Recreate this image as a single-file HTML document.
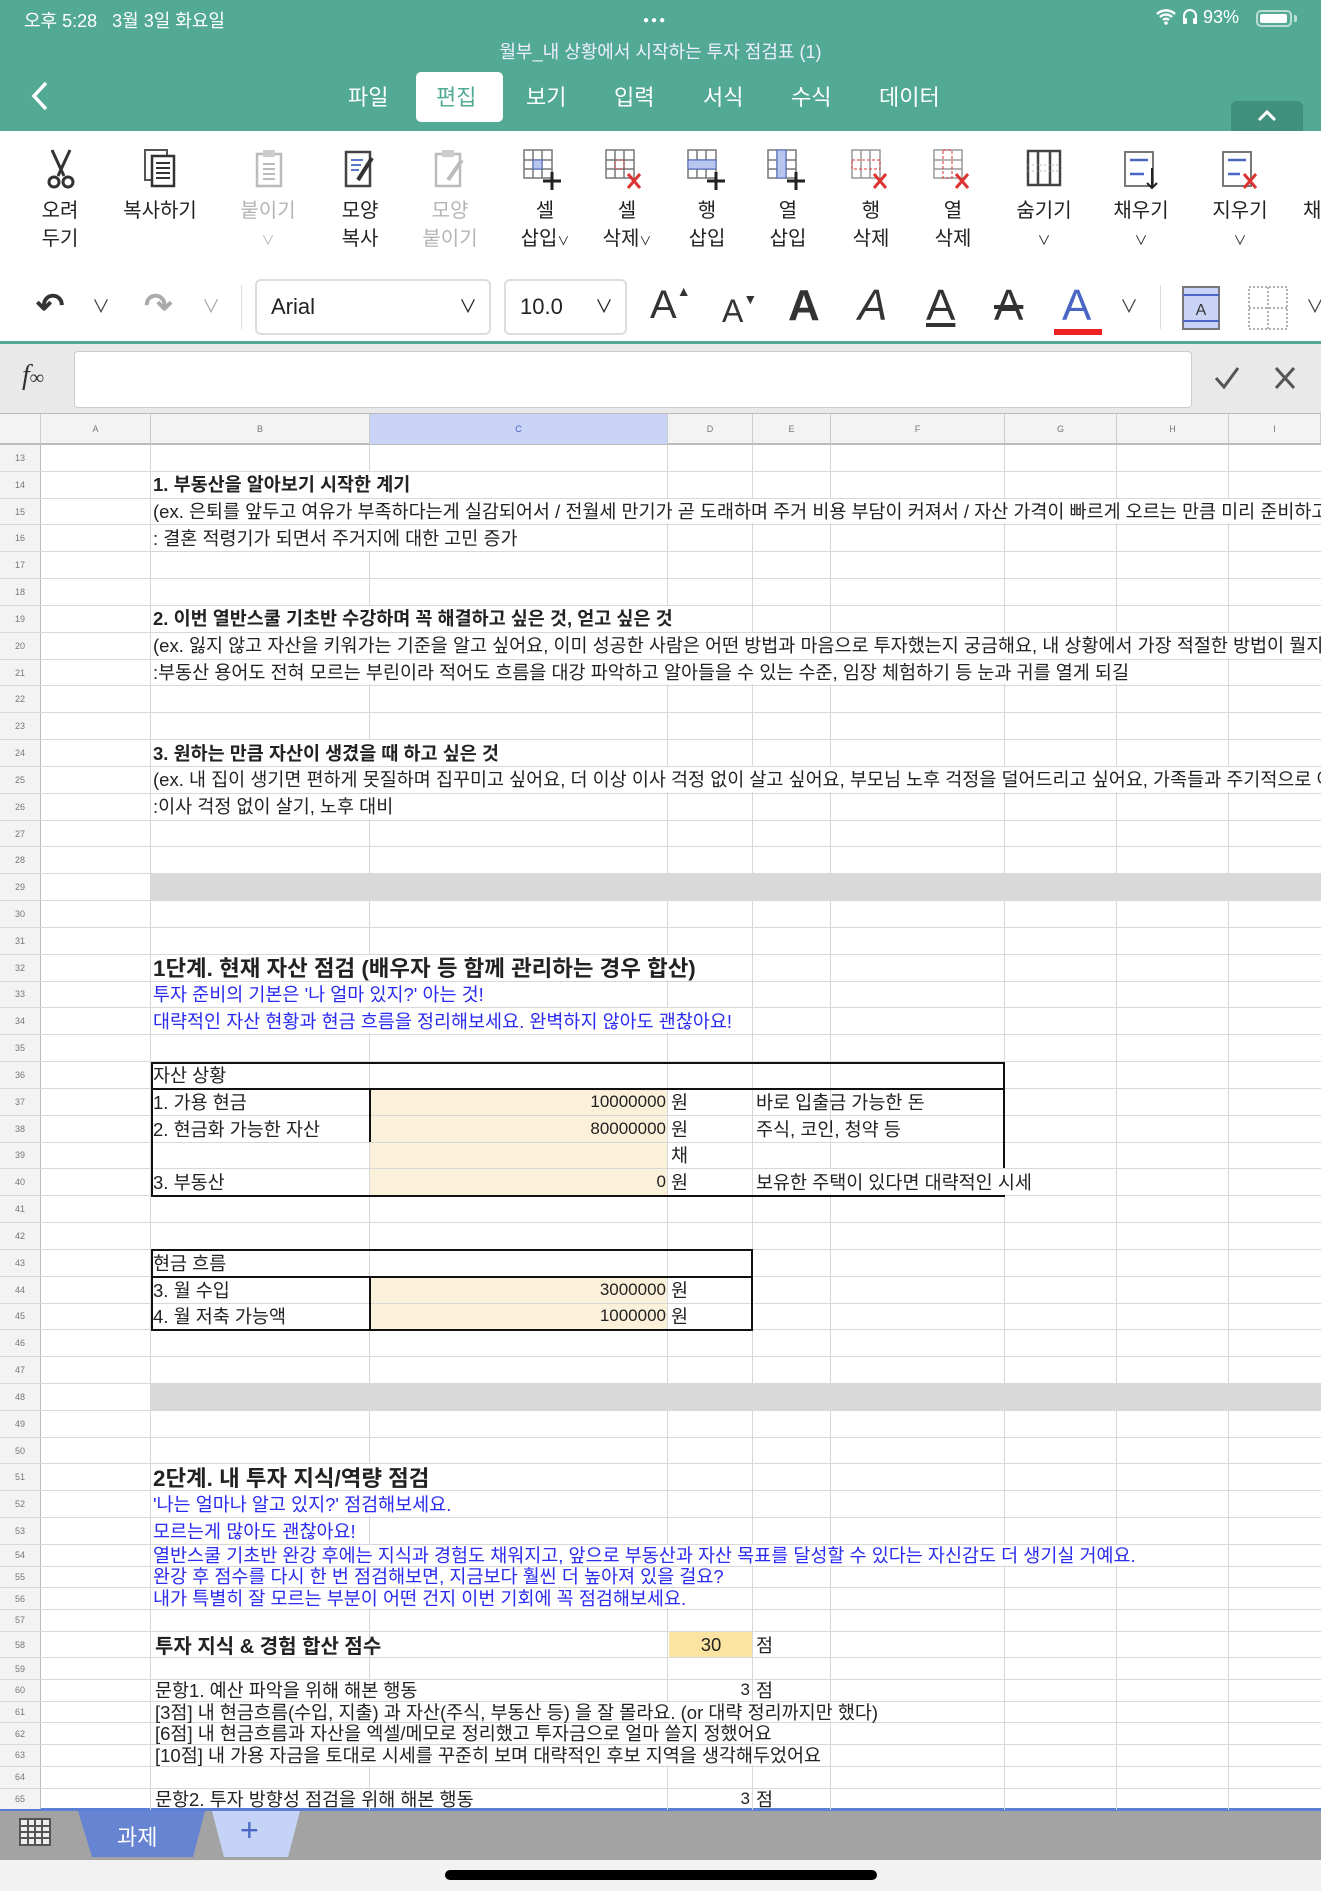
<!DOCTYPE html>
<html><head><meta charset="utf-8"><style>
*{margin:0;padding:0}
body{width:1321px;height:1891px;overflow:hidden;position:relative;background:#fff;font-family:"Liberation Sans","Noto Sans CJK KR",sans-serif;color:#222}
.abs{position:absolute}
#top{left:0;top:0;width:1321px;height:131px;background:#53aa94;color:#fff}
.tab{position:absolute;top:80px;font-size:22px;color:#fff}
#tb{left:0;top:131px;width:1321px;height:140px;background:#fff;border-bottom:1px solid #eee}
.tl{position:absolute;top:197px;width:90px;text-align:center;font-size:20px;line-height:28px;color:#222}
.g{color:#b5b5b5}
#fb{left:0;top:271px;width:1321px;height:70px;background:#fff;border-bottom:3px solid #53aa94}
#fx{left:0;top:344px;width:1321px;height:69px;background:#e9e9e9}
#ch{left:0;top:413px;width:1321px;height:32px;background:#f3f3f3;border-top:1px solid #bbb;border-bottom:2px solid #bbb;box-sizing:border-box}
.cl{position:absolute;top:0;height:30px;line-height:30px;text-align:center;font-size:9px;color:#777;border-right:1px solid #ccc;box-sizing:border-box}
#grid{left:0;top:445px;width:1321px;height:1365px;overflow:hidden}
.r{position:relative;box-sizing:border-box;border-bottom:1px solid #d8d8d8}
.a{height:26.84px}.b{height:21.7px}.c{height:26.7px}
.n{position:absolute;left:0;top:0;width:41px;height:100%;display:flex;align-items:center;justify-content:center;font-size:9px;color:#777;z-index:3;background:#f3f3f3;border-right:1px solid #bbb;box-sizing:border-box}
.t{position:absolute;left:153px;top:0;height:calc(100% - 1px);display:flex;align-items:center;white-space:nowrap;background:#fff;z-index:2;font-size:18.5px;padding-right:3px}
.u{position:absolute;top:0;height:100%;display:flex;align-items:center;white-space:nowrap;z-index:2;font-size:18.5px}
.bd{font-weight:bold}
.bl{color:#2b2bf0}
.lg{font-size:22.4px}
.vl{position:absolute;top:0;width:1px;height:1365px;background:#d8d8d8;z-index:1}
.fill{position:absolute;z-index:0}
.k{position:absolute;background:#111;z-index:4}
.num{font-size:17px}
</style></head><body>

<div id="top" class="abs">
  <div class="abs" style="left:24px;top:7px;font-size:18px">오후 5:28&nbsp;&nbsp;&nbsp;3월 3일 화요일</div>
  <div class="abs" style="left:643px;top:15px;font-size:10px;letter-spacing:2px">●●●</div>
  <div class="abs" style="left:1155px;top:7px;font-size:18px">
    <svg width="22" height="18" viewBox="0 0 22 18" style="vertical-align:-2px"><path d="M2 7a13 13 0 0 1 18 0M5 10a8.5 8.5 0 0 1 12 0M8 13a4 4 0 0 1 6 0" stroke="#fff" stroke-width="2.4" fill="none"/><circle cx="11" cy="16" r="1.8" fill="#fff"/></svg>
    <svg width="16" height="18" viewBox="0 0 16 18" style="vertical-align:-2px"><path d="M2 14V9a6 6 0 0 1 12 0v5" stroke="#fff" stroke-width="2" fill="none"/><rect x="1" y="11" width="4" height="6" rx="1" fill="#fff"/><rect x="11" y="11" width="4" height="6" rx="1" fill="#fff"/></svg>
    93%</div>
  <div class="abs" style="left:1256px;top:10px;width:36px;height:17px;border:2px solid rgba(255,255,255,.6);border-radius:5px;box-sizing:border-box"><div style="margin:2px;width:27px;height:9px;background:#fff;border-radius:2px"></div></div>
  <div class="abs" style="left:1294px;top:15px;width:3px;height:7px;background:rgba(255,255,255,.6);border-radius:0 2px 2px 0"></div>
  <div class="abs" style="left:0;width:1321px;top:38px;text-align:center;font-size:18px;color:#eef">월부_내 상황에서 시작하는 투자 점검표 (1)</div>
  <svg class="abs" style="left:30px;top:80px" width="20" height="32" viewBox="0 0 20 32"><path d="M16 3L4 16l12 13" stroke="#fff" stroke-width="3.5" fill="none"/></svg>
  <div class="abs" style="left:416px;top:72px;width:87px;height:50px;background:#fff;border-radius:5px"></div>
  <div class="tab" style="left:348px">파일</div>
  <div class="tab" style="left:436px;color:#53aa94">편집</div>
  <div class="tab" style="left:526px">보기</div>
  <div class="tab" style="left:614px">입력</div>
  <div class="tab" style="left:703px">서식</div>
  <div class="tab" style="left:791px">수식</div>
  <div class="tab" style="left:879px">데이터</div>
  <div class="abs" style="left:1231px;top:101px;width:72px;height:30px;background:#3f917d;border-radius:6px 6px 0 0"></div>
  <svg class="abs" style="left:1256px;top:108px" width="22" height="14" viewBox="0 0 22 14"><path d="M3 12l8-8 8 8" stroke="#fff" stroke-width="3" fill="none"/></svg>
</div>

<div id="tb" class="abs"></div>
<svg class="abs" style="left:44px;top:148px" width="34" height="42" viewBox="0 0 34 42"><path d="M8 2l12 26M26 2L14 28" stroke="#333" stroke-width="3"/><circle cx="10" cy="34" r="5" stroke="#333" stroke-width="3" fill="none"/><circle cx="24" cy="34" r="5" stroke="#333" stroke-width="3" fill="none"/></svg>
<svg class="abs" style="left:142px;top:148px" width="36" height="42" viewBox="0 0 36 42"><rect x="3" y="2" width="22" height="30" fill="#fff" stroke="#555" stroke-width="2"/><rect x="10" y="8" width="22" height="30" fill="#fff" stroke="#333" stroke-width="2.5"/><path d="M14 15h14M14 20h14M14 25h14M14 30h14" stroke="#333" stroke-width="2"/></svg>
<svg class="abs" style="left:252px;top:148px" width="34" height="42" viewBox="0 0 34 42"><rect x="5" y="6" width="24" height="32" fill="#fff" stroke="#bbb" stroke-width="2.5"/><rect x="11" y="2" width="12" height="7" fill="#ccc"/><path d="M11 16h12M11 21h12M11 26h12M11 31h12" stroke="#bbb" stroke-width="2"/></svg>
<svg class="abs" style="left:342px;top:148px" width="36" height="42" viewBox="0 0 36 42"><rect x="4" y="4" width="24" height="34" fill="#fff" stroke="#444" stroke-width="2.5"/><path d="M9 12h12M9 17h10M9 22h8" stroke="#5a78c8" stroke-width="2"/><path d="M30 10L16 32" stroke="#333" stroke-width="4"/></svg>
<svg class="abs" style="left:432px;top:148px" width="36" height="42" viewBox="0 0 36 42"><rect x="4" y="6" width="24" height="32" fill="#fff" stroke="#bbb" stroke-width="2.5"/><rect x="10" y="2" width="12" height="7" fill="#ccc"/><path d="M30 12L16 32" stroke="#bbb" stroke-width="4"/></svg>
<svg class="abs" style="left:522px;top:148px" width="40" height="44" viewBox="0 0 40 44"><path d="M2 2h28v28H2zM2 12h28M2 21h28M11 2v28M20 2v28" stroke="#777" stroke-width="1.5" fill="none"/><rect x="11" y="12" width="9" height="9" fill="#b8c6ee" stroke="#4a66c4"/><path d="M30 24v18M21 33h18" stroke="#222" stroke-width="3"/></svg>
<svg class="abs" style="left:604px;top:148px" width="40" height="44" viewBox="0 0 40 44"><path d="M2 2h28v28H2zM2 12h28M2 21h28M11 2v28M20 2v28" stroke="#777" stroke-width="1.5" fill="none"/><rect x="11" y="12" width="9" height="9" fill="none" stroke="#d33" stroke-dasharray="2 2"/><path d="M24 26l12 14M36 26L24 40" stroke="#d33" stroke-width="3"/></svg>
<svg class="abs" style="left:686px;top:148px" width="40" height="44" viewBox="0 0 40 44"><path d="M2 2h28v28H2zM2 12h28M2 21h28M11 2v28M20 2v28" stroke="#777" stroke-width="1.5" fill="none"/><rect x="2" y="12" width="28" height="9" fill="#b8c6ee" stroke="#4a66c4"/><path d="M30 24v18M21 33h18" stroke="#222" stroke-width="3"/></svg>
<svg class="abs" style="left:766px;top:148px" width="40" height="44" viewBox="0 0 40 44"><path d="M2 2h28v28H2zM2 12h28M2 21h28M11 2v28M20 2v28" stroke="#777" stroke-width="1.5" fill="none"/><rect x="11" y="2" width="9" height="28" fill="#b8c6ee" stroke="#4a66c4"/><path d="M30 24v18M21 33h18" stroke="#222" stroke-width="3"/></svg>
<svg class="abs" style="left:850px;top:148px" width="40" height="44" viewBox="0 0 40 44"><path d="M2 2h28v28H2zM11 2v28M20 2v28" stroke="#999" stroke-width="1.5" fill="none"/><rect x="2" y="12" width="28" height="9" fill="none" stroke="#d33" stroke-dasharray="3 2"/><path d="M24 26l12 14M36 26L24 40" stroke="#d33" stroke-width="3"/></svg>
<svg class="abs" style="left:932px;top:148px" width="40" height="44" viewBox="0 0 40 44"><path d="M2 2h28v28H2zM2 12h28M2 21h28" stroke="#999" stroke-width="1.5" fill="none"/><rect x="11" y="2" width="9" height="28" fill="none" stroke="#d33" stroke-dasharray="3 2"/><path d="M24 26l12 14M36 26L24 40" stroke="#d33" stroke-width="3"/></svg>
<svg class="abs" style="left:1025px;top:148px" width="38" height="42" viewBox="0 0 38 42"><path d="M3 3h32v34H3zM13 3v34M25 3v34" stroke="#444" stroke-width="2.5" fill="none"/><path d="M3 17h32M3 23h32" stroke="#bbb" stroke-dasharray="2 2"/></svg>
<svg class="abs" style="left:1122px;top:148px" width="38" height="44" viewBox="0 0 38 44"><rect x="3" y="4" width="28" height="34" fill="#fff" stroke="#777" stroke-width="2"/><path d="M8 12h18M8 26h14" stroke="#4a66c4" stroke-width="2.5"/><path d="M30 20v20M25 35l5 5 5-5" stroke="#222" stroke-width="2" fill="none"/></svg>
<svg class="abs" style="left:1220px;top:148px" width="40" height="44" viewBox="0 0 40 44"><rect x="3" y="4" width="28" height="34" fill="#fff" stroke="#777" stroke-width="2"/><path d="M8 12h18M8 26h12" stroke="#4a66c4" stroke-width="2.5"/><path d="M24 26l12 14M36 26L24 40" stroke="#d33" stroke-width="3"/></svg>
<div class="tl" style="left:15px">오려<br>두기</div>
<div class="tl" style="left:115px">복사하기</div>
<div class="tl g" style="left:223px">붙이기<br><span style="font-size:13px">∨</span></div>
<div class="tl" style="left:315px">모양<br>복사</div>
<div class="tl g" style="left:405px">모양<br>붙이기</div>
<div class="tl" style="left:500px">셀<br>삽입<span style="font-size:12px">∨</span></div>
<div class="tl" style="left:582px">셀<br>삭제<span style="font-size:12px">∨</span></div>
<div class="tl" style="left:662px">행<br>삽입</div>
<div class="tl" style="left:743px">열<br>삽입</div>
<div class="tl" style="left:826px">행<br>삭제</div>
<div class="tl" style="left:908px">열<br>삭제</div>
<div class="tl" style="left:999px">숨기기<br><span style="font-size:13px">∨</span></div>
<div class="tl" style="left:1096px">채우기<br><span style="font-size:13px">∨</span></div>
<div class="tl" style="left:1195px">지우기<br><span style="font-size:13px">∨</span></div>
<div class="tl" style="left:1303px;text-align:left">채</div>

<div id="fb" class="abs">
  <div class="abs" style="left:36px;top:15px;font-size:34px;color:#333;font-weight:bold">↶</div>
  <div class="abs" style="left:92px;top:22px;font-size:18px;color:#444">∨</div>
  <div class="abs" style="left:144px;top:15px;font-size:34px;color:#aaa;font-weight:bold">↷</div>
  <div class="abs" style="left:202px;top:22px;font-size:18px;color:#aaa">∨</div>
  <div class="abs" style="left:241px;top:14px;width:1px;height:44px;background:#ddd"></div>
  <div class="abs" style="left:255px;top:8px;width:236px;height:56px;border:2px solid #ddd;border-radius:6px;box-sizing:border-box;font-size:22px;line-height:52px;padding-left:14px;color:#222">Arial<span style="position:absolute;right:12px;font-size:18px">∨</span></div>
  <div class="abs" style="left:504px;top:8px;width:123px;height:56px;border:2px solid #ddd;border-radius:6px;box-sizing:border-box;font-size:22px;line-height:52px;padding-left:14px;color:#222">10.0<span style="position:absolute;right:12px;font-size:18px">∨</span></div>
  <div class="abs" style="left:650px;top:12px;font-size:40px;color:#333">A<sup style="font-size:14px;vertical-align:22px">▲</sup></div>
  <div class="abs" style="left:722px;top:20px;font-size:32px;color:#333">A<sup style="font-size:14px;vertical-align:18px">▼</sup></div>
  <div class="abs" style="left:788px;top:10px;font-size:44px;color:#333;font-weight:bold">A</div>
  <div class="abs" style="left:858px;top:10px;font-size:44px;color:#333;font-style:italic">A</div>
  <div class="abs" style="left:926px;top:10px;font-size:44px;color:#333;text-decoration:underline">A</div>
  <div class="abs" style="left:994px;top:10px;font-size:44px;color:#333;text-decoration:line-through">A</div>
  <div class="abs" style="left:1062px;top:10px;font-size:44px;color:#4a66c4">A</div>
  <div class="abs" style="left:1054px;top:58px;width:48px;height:6px;background:#e22"></div>
  <div class="abs" style="left:1120px;top:22px;font-size:18px;color:#444">∨</div>
  <div class="abs" style="left:1160px;top:14px;width:1px;height:44px;background:#ddd"></div>
  <svg class="abs" style="left:1181px;top:14px" width="40" height="46" viewBox="0 0 40 46"><rect x="2" y="2" width="36" height="42" fill="#c8d3f5" stroke="#777" stroke-width="2"/><path d="M2 10h36M2 36h36" stroke="#4a66c4" stroke-width="2"/><text x="20" y="30" text-anchor="middle" font-size="16" font-family="Liberation Sans" fill="#333">A</text></svg>
  <svg class="abs" style="left:1247px;top:14px" width="42" height="46" viewBox="0 0 42 46"><path d="M2 2h38v42H2zM21 2v42M2 23h38" stroke="#999" stroke-width="1.5" stroke-dasharray="2 2" fill="none"/></svg>
  <div class="abs" style="left:1306px;top:22px;font-size:18px;color:#444">∨</div>
</div>

<div id="fx" class="abs">
  <div class="abs" style="left:22px;top:16px;font-size:28px;font-family:'Liberation Serif',serif;font-style:italic;color:#333">f<span style="font-size:20px">∞</span></div>
  <div class="abs" style="left:74px;top:7px;width:1116px;height:55px;background:#fff;border:1px solid #ccc;border-radius:4px"></div>
  <svg class="abs" style="left:1214px;top:22px" width="26" height="24" viewBox="0 0 26 24"><path d="M2 12l8 9L24 2" stroke="#555" stroke-width="3" fill="none"/></svg>
  <svg class="abs" style="left:1274px;top:22px" width="22" height="24" viewBox="0 0 22 24"><path d="M2 2l18 20M20 2L2 22" stroke="#555" stroke-width="3"/></svg>
</div>

<div id="ch" class="abs">
  <div class="cl" style="left:0;width:41px"></div>
  <div class="cl" style="left:41px;width:110px">A</div>
  <div class="cl" style="left:151px;width:219px">B</div>
  <div class="cl" style="left:370px;width:298px;background:#c8d3f5;color:#4a66c4">C</div>
  <div class="cl" style="left:668px;width:85px">D</div>
  <div class="cl" style="left:753px;width:78px">E</div>
  <div class="cl" style="left:831px;width:174px">F</div>
  <div class="cl" style="left:1005px;width:112px">G</div>
  <div class="cl" style="left:1117px;width:112px">H</div>
  <div class="cl" style="left:1229px;width:92px">I</div>
</div>

<div id="grid" class="abs">
  <div class="fill" style="left:151px;top:429.4px;width:1170px;height:26.8px;background:#d9d9d9"></div>
  <div class="fill" style="left:151px;top:939.4px;width:1170px;height:26.8px;background:#d9d9d9"></div>
  <div class="fill" style="left:370px;top:644px;width:298px;height:107px;background:#fbf1da"></div>
  <div class="fill" style="left:370px;top:832px;width:298px;height:53.6px;background:#fbf1da"></div>
  <div class="fill" style="left:669px;top:1187.2px;width:84px;height:26px;background:#fbe3a1"></div>
  <div class="vl" style="left:150px"></div><div class="vl" style="left:369px"></div><div class="vl" style="left:667px"></div><div class="vl" style="left:752px"></div><div class="vl" style="left:830px"></div><div class="vl" style="left:1004px"></div><div class="vl" style="left:1116px"></div><div class="vl" style="left:1228px"></div>
  <div class="k" style="left:151px;top:617px;width:854px;height:2px"></div>
  <div class="k" style="left:151px;top:643px;width:854px;height:2px"></div>
  <div class="k" style="left:151px;top:750px;width:854px;height:2px"></div>
  <div class="k" style="left:151px;top:617px;width:2px;height:135px"></div>
  <div class="k" style="left:1003px;top:617px;width:2px;height:106px"></div>
  <div class="k" style="left:369px;top:643px;width:2px;height:54px"></div>
  <div class="k" style="left:151px;top:804px;width:602px;height:2px"></div>
  <div class="k" style="left:151px;top:831px;width:602px;height:2px"></div>
  <div class="k" style="left:151px;top:884px;width:602px;height:2px"></div>
  <div class="k" style="left:151px;top:804px;width:2px;height:82px"></div>
  <div class="k" style="left:751px;top:804px;width:2px;height:82px"></div>
  <div class="k" style="left:369px;top:831px;width:2px;height:54px"></div>

  <div class="r a"><div class="n">13</div></div>
  <div class="r a"><div class="n">14</div><span class="t bd">1. 부동산을 알아보기 시작한 계기</span></div>
  <div class="r a"><div class="n">15</div><span class="t">(ex. 은퇴를 앞두고 여유가 부족하다는게 실감되어서 / 전월세 만기가 곧 도래하며 주거 비용 부담이 커져서 / 자산 가격이 빠르게 오르는 만큼 미리 준비하고 싶어서)</span></div>
  <div class="r a"><div class="n">16</div><span class="t">: 결혼 적령기가 되면서 주거지에 대한 고민 증가</span></div>
  <div class="r a"><div class="n">17</div></div>
  <div class="r a"><div class="n">18</div></div>
  <div class="r a"><div class="n">19</div><span class="t bd">2. 이번 열반스쿨 기초반 수강하며 꼭 해결하고 싶은 것, 얻고 싶은 것</span></div>
  <div class="r a"><div class="n">20</div><span class="t">(ex. 잃지 않고 자산을 키워가는 기준을 알고 싶어요, 이미 성공한 사람은 어떤 방법과 마음으로 투자했는지 궁금해요, 내 상황에서 가장 적절한 방법이 뭘지 알고 싶어요)</span></div>
  <div class="r a"><div class="n">21</div><span class="t">:부동산 용어도 전혀 모르는 부린이라 적어도 흐름을 대강 파악하고 알아들을 수 있는 수준, 임장 체험하기 등 눈과 귀를 열게 되길</span></div>
  <div class="r a"><div class="n">22</div></div>
  <div class="r a"><div class="n">23</div></div>
  <div class="r a"><div class="n">24</div><span class="t bd">3. 원하는 만큼 자산이 생겼을 때 하고 싶은 것</span></div>
  <div class="r a"><div class="n">25</div><span class="t">(ex. 내 집이 생기면 편하게 못질하며 집꾸미고 싶어요, 더 이상 이사 걱정 없이 살고 싶어요, 부모님 노후 걱정을 덜어드리고 싶어요, 가족들과 주기적으로 여행을)</span></div>
  <div class="r a"><div class="n">26</div><span class="t">:이사 걱정 없이 살기, 노후 대비</span></div>
  <div class="r a"><div class="n">27</div></div>
  <div class="r a"><div class="n">28</div></div>
  <div class="r a"><div class="n">29</div></div>
  <div class="r a"><div class="n">30</div></div>
  <div class="r a"><div class="n">31</div></div>
  <div class="r a"><div class="n">32</div><span class="t bd lg">1단계. 현재 자산 점검 (배우자 등 함께 관리하는 경우 합산)</span></div>
  <div class="r a"><div class="n">33</div><span class="t bl">투자 준비의 기본은 '나 얼마 있지?' 아는 것!</span></div>
  <div class="r a"><div class="n">34</div><span class="t bl">대략적인 자산 현황과 현금 흐름을 정리해보세요. 완벽하지 않아도 괜찮아요!</span></div>
  <div class="r a"><div class="n">35</div></div>
  <div class="r a"><div class="n">36</div><span class="u" style="left:153px">자산 상황</span></div>
  <div class="r a"><div class="n">37</div><span class="u" style="left:153px">1. 가용 현금</span><span class="u num" style="right:655px">10000000</span><span class="u" style="left:671px">원</span><span class="u" style="left:756px">바로 입출금 가능한 돈</span></div>
  <div class="r a"><div class="n">38</div><span class="u" style="left:153px">2. 현금화 가능한 자산</span><span class="u num" style="right:655px">80000000</span><span class="u" style="left:671px">원</span><span class="u" style="left:756px">주식, 코인, 청약 등</span></div>
  <div class="r a"><div class="n">39</div><span class="u" style="left:671px">채</span></div>
  <div class="r a"><div class="n">40</div><span class="u" style="left:153px">3. 부동산</span><span class="u num" style="right:655px">0</span><span class="u" style="left:671px">원</span><span class="t" style="left:756px">보유한 주택이 있다면 대략적인 시세</span></div>
  <div class="r a"><div class="n">41</div></div>
  <div class="r a"><div class="n">42</div></div>
  <div class="r a"><div class="n">43</div><span class="u" style="left:153px">현금 흐름</span></div>
  <div class="r a"><div class="n">44</div><span class="u" style="left:153px">3. 월 수입</span><span class="u num" style="right:655px">3000000</span><span class="u" style="left:671px">원</span></div>
  <div class="r a"><div class="n">45</div><span class="u" style="left:153px">4. 월 저축 가능액</span><span class="u num" style="right:655px">1000000</span><span class="u" style="left:671px">원</span></div>
  <div class="r a"><div class="n">46</div></div>
  <div class="r a"><div class="n">47</div></div>
  <div class="r a"><div class="n">48</div></div>
  <div class="r a"><div class="n">49</div></div>
  <div class="r a"><div class="n">50</div></div>
  <div class="r a"><div class="n">51</div><span class="t bd lg">2단계. 내 투자 지식/역량 점검</span></div>
  <div class="r a"><div class="n">52</div><span class="t bl">'나는 얼마나 알고 있지?' 점검해보세요.</span></div>
  <div class="r a"><div class="n">53</div><span class="t bl">모르는게 많아도 괜찮아요!</span></div>
  <div class="r b"><div class="n">54</div><span class="t bl">열반스쿨 기초반 완강 후에는 지식과 경험도 채워지고, 앞으로 부동산과 자산 목표를 달성할 수 있다는 자신감도 더 생기실 거예요.</span></div>
  <div class="r b"><div class="n">55</div><span class="t bl">완강 후 점수를 다시 한 번 점검해보면, 지금보다 훨씬 더 높아져 있을 걸요?</span></div>
  <div class="r b"><div class="n">56</div><span class="t bl">내가 특별히 잘 모르는 부분이 어떤 건지 이번 기회에 꼭 점검해보세요.</span></div>
  <div class="r b"><div class="n">57</div></div>
  <div class="r c"><div class="n">58</div><span class="u bd" style="left:155px;font-size:20px">투자 지식 &amp; 경험 합산 점수</span><span class="u" style="left:669px;width:84px;justify-content:center">30</span><span class="u" style="left:756px">점</span></div>
  <div class="r b"><div class="n">59</div></div>
  <div class="r b"><div class="n">60</div><span class="u" style="left:155px">문항1. 예산 파악을 위해 해본 행동</span><span class="u num" style="right:571px">3</span><span class="u" style="left:756px">점</span></div>
  <div class="r b"><div class="n">61</div><span class="t" style="left:155px">[3점] 내 현금흐름(수입, 지출) 과 자산(주식, 부동산 등) 을 잘 몰라요. (or 대략 정리까지만 했다)</span></div>
  <div class="r b"><div class="n">62</div><span class="t" style="left:155px">[6점] 내 현금흐름과 자산을 엑셀/메모로 정리했고 투자금으로 얼마 쓸지 정했어요</span></div>
  <div class="r b"><div class="n">63</div><span class="t" style="left:155px">[10점] 내 가용 자금을 토대로 시세를 꾸준히 보며 대략적인 후보 지역을 생각해두었어요</span></div>
  <div class="r b"><div class="n">64</div></div>
  <div class="r b"><div class="n">65</div><span class="u" style="left:155px">문항2. 투자 방향성 점검을 위해 해본 행동</span><span class="u num" style="right:571px">3</span><span class="u" style="left:756px">점</span></div>
</div>

<div class="abs" style="left:0;top:1808px;width:1321px;height:52px;background:#a3a3a3;border-top:3px solid #5b7fd6;box-sizing:border-box"></div>
<svg class="abs" style="left:19px;top:1818px" width="32" height="30" viewBox="0 0 32 30"><rect x="1" y="1" width="30" height="26" fill="#eee" stroke="#555" stroke-width="2"/><path d="M1 8h30M1 14h30M1 20h30M9 1v26M16 1v26M23 1v26" stroke="#555" stroke-width="2"/></svg>
<svg class="abs" style="left:72px;top:1811px" width="240" height="48" viewBox="0 0 240 48"><path d="M6 0h127l-12 46H20z" fill="#6784d3"/><path d="M140 0h88l-12 46h-64z" fill="#c5d3f7"/></svg>
<div class="abs" style="left:117px;top:1820px;font-size:22px;color:#fff">과제</div>
<div class="abs" style="left:240px;top:1812px;font-size:32px;color:#4a66c4">+</div>
<div class="abs" style="left:0;top:1860px;width:1321px;height:31px;background:#f2f2f2"></div>
<div class="abs" style="left:445px;top:1870px;width:432px;height:10px;background:#000;border-radius:5px"></div>
</body></html>
